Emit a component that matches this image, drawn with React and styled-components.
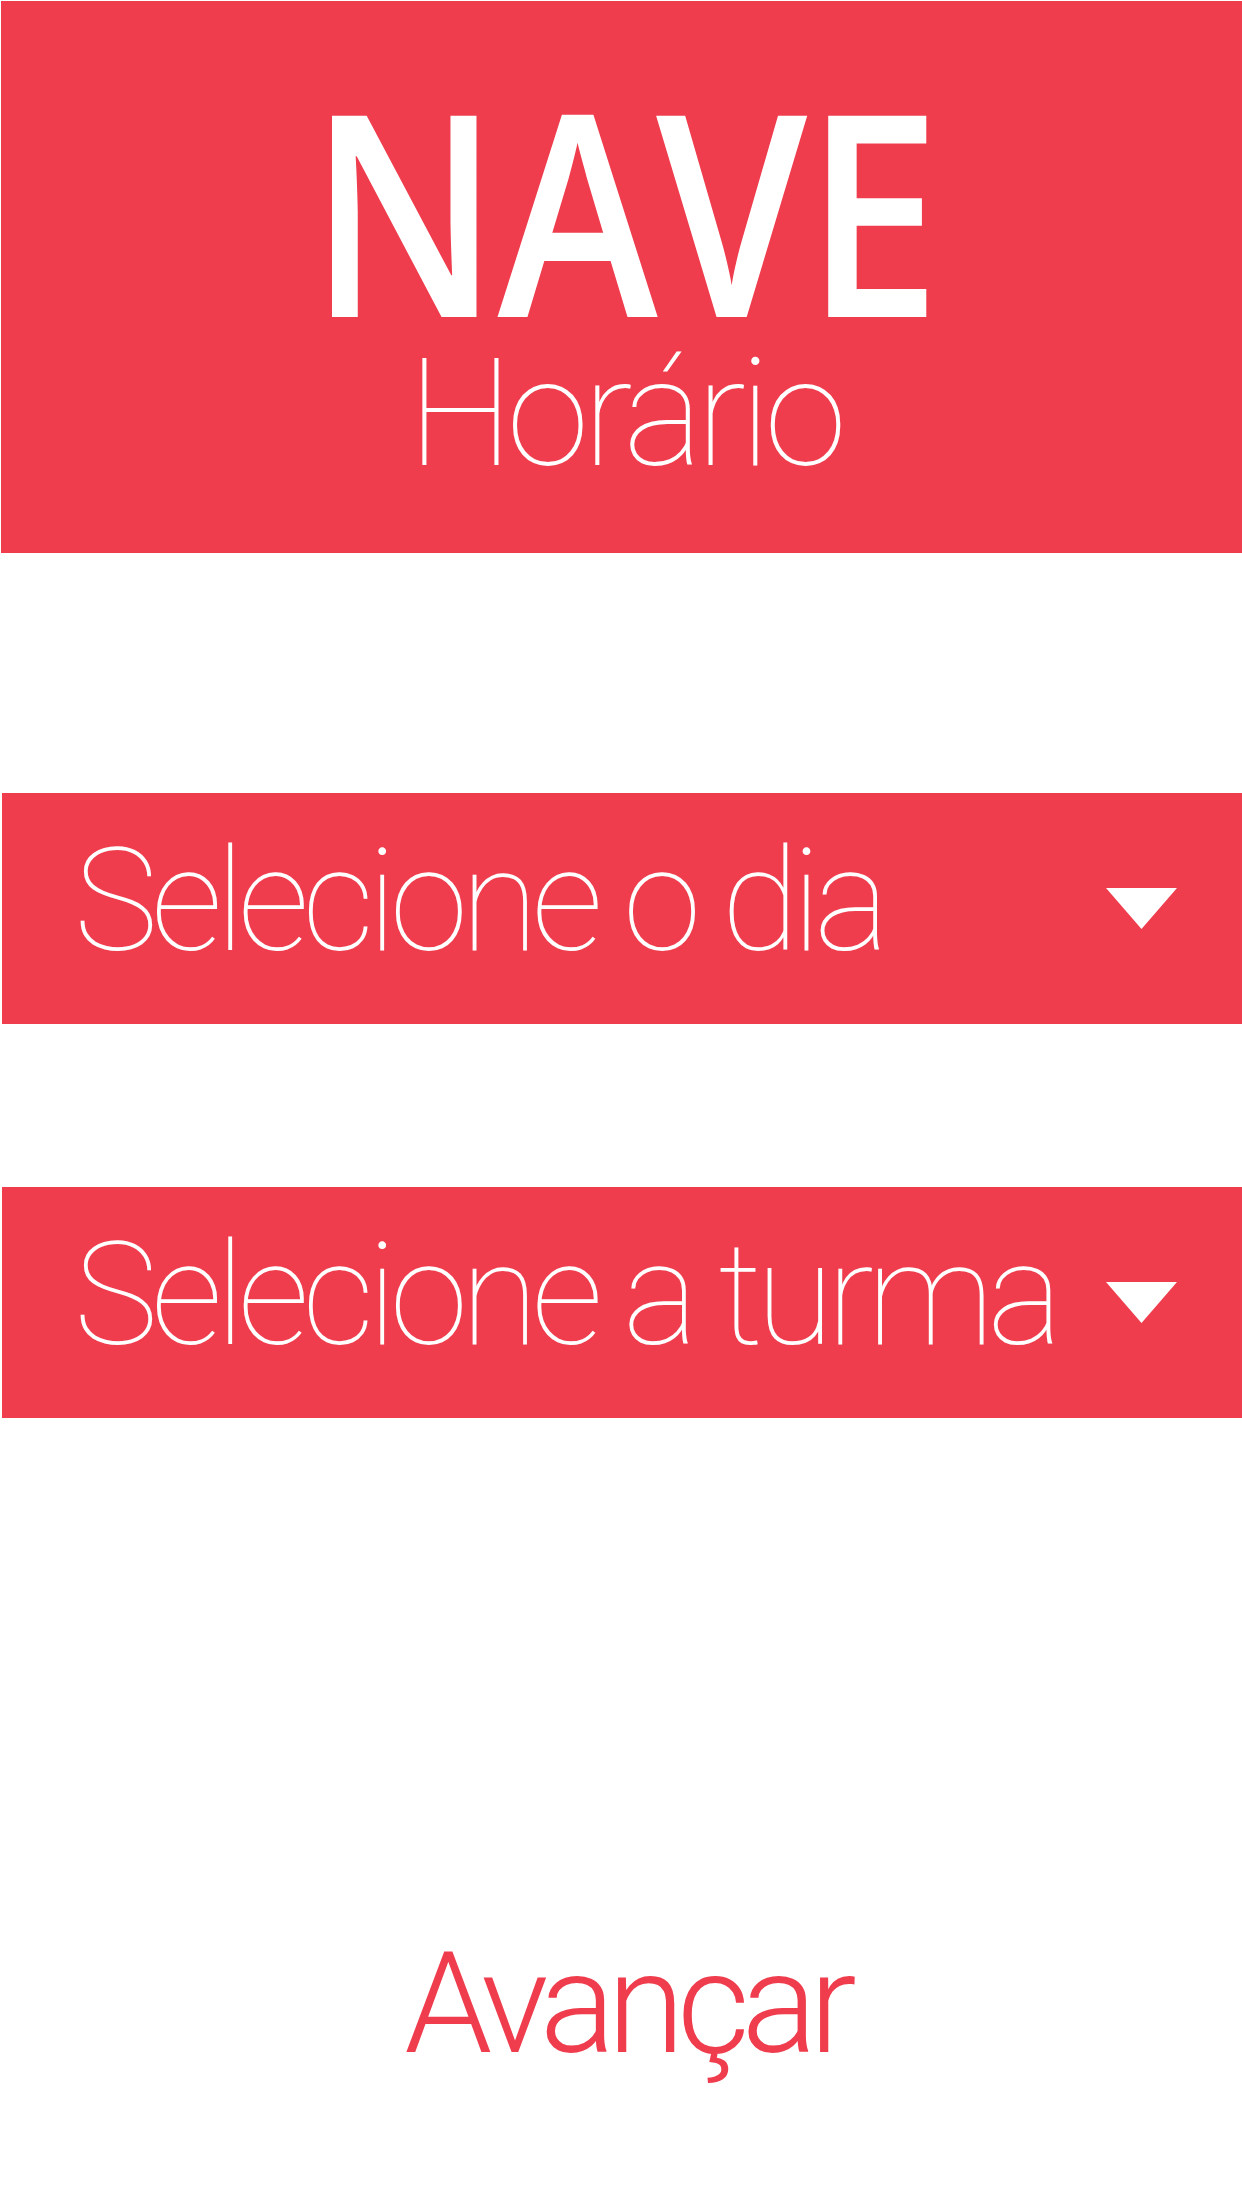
import React from 'react';
import styled, { createGlobalStyle } from 'styled-components';

const RED = '#ef3d4e';

const GlobalStyle = createGlobalStyle`
  html, body {
    margin: 0;
    padding: 0;
    background: #ffffff;
  }
  body {
    font-family: Roboto, "Liberation Sans", sans-serif;
  }
`;

const Page = styled.div`
  width: 1242px;
  min-height: 2208px;
  padding: 1px 0 0 1px;
  box-sizing: border-box;
  background: #ffffff;
`;

const Header = styled.header`
  height: 552px;
  background: ${RED};
  display: flex;
  flex-direction: column;
  align-items: center;
  padding: 74px 0 0 5px;
  box-sizing: border-box;
`;

const Brand = styled.h1`
  margin: 0;
  font-family: "Open Sans", sans-serif;
  font-weight: 600;
  font-size: 282px;
  line-height: 0.95;
  color: #ffffff;
  transform: scaleX(0.86);
  letter-spacing: -2px;
`;

const Subtitle = styled.h2`
  margin: 4px 0 0;
  font-family: Roboto, sans-serif;
  font-weight: 100;
  font-size: 150px;
  line-height: 0.9;
  letter-spacing: -6.5px;
  color: #ffffff;
`;

const Form = styled.main`
  display: flex;
  flex-direction: column;
  gap: 163px;
  margin-top: 240px;
`;

const Select = styled.button`
  display: flex;
  align-items: center;
  width: 100%;
  height: 231px;
  margin-left: 1px;
  padding: 0 66px 0 72px;
  box-sizing: border-box;
  border: none;
  background: ${RED};
  cursor: pointer;
`;

const SelectLabel = styled.span`
  margin-bottom: 14px;
  font-family: Roboto, sans-serif;
  font-weight: 100;
  font-size: 142px;
  line-height: 1;
  letter-spacing: -7px;
  color: #ffffff;
  white-space: nowrap;
`;

const Caret = styled.svg`
  width: 71px;
  height: 41px;
  margin-left: auto;
  flex-shrink: 0;
`;

const Footer = styled.div`
  display: flex;
  justify-content: center;
  margin-top: 515px;
  padding-left: 10px;
`;

const NextButton = styled.button`
  border: none;
  background: none;
  padding: 0;
  font-family: Roboto, sans-serif;
  font-weight: 300;
  font-size: 141px;
  line-height: 1;
  letter-spacing: -8px;
  color: ${RED};
  cursor: pointer;
`;

const Dropdown = ({ label }) => (
  <Select type="button">
    <SelectLabel>{label}</SelectLabel>
    <Caret viewBox="0 0 71 41">
      <polygon points="0,0 71,0 35.5,41" fill="#ffffff" />
    </Caret>
  </Select>
);

export default function App() {
  return (
    <Page>
      <GlobalStyle />
      <Header>
        <Brand>NAVE</Brand>
        <Subtitle>Horário</Subtitle>
      </Header>
      <Form>
        <Dropdown label="Selecione o dia" />
        <Dropdown label="Selecione a turma" />
      </Form>
      <Footer>
        <NextButton type="button">Avançar</NextButton>
      </Footer>
    </Page>
  );
}
